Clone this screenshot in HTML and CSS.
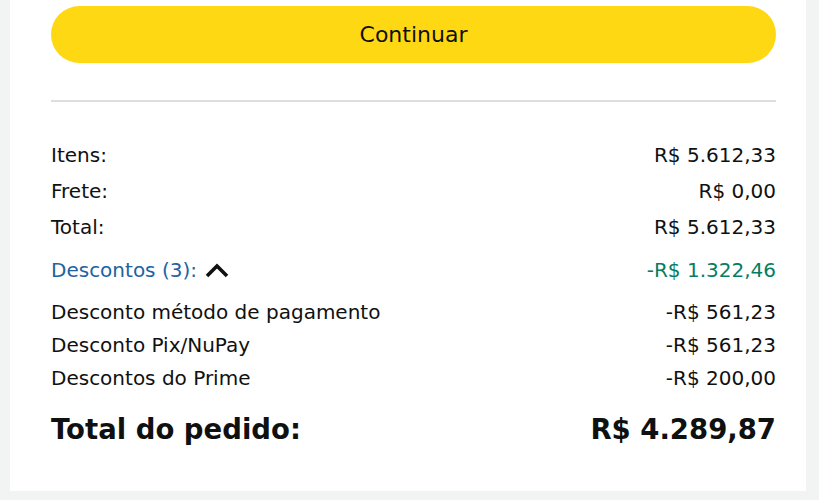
FILE: index.html
```html
<!DOCTYPE html>
<html lang="pt-BR">
<head>
    <meta charset="UTF-8">
    <meta name="viewport" content="width=device-width, initial-scale=1.0">
    <title>Resumo do pedido</title>
    <link rel="stylesheet" href="styles.css">
</head>
<body>
    <div class="card">
        <button class="continue-btn">Continuar</button>
        <hr class="divider">
        <div class="summary">
            <div class="line"><span>Itens:</span><span>R$ 5.612,33</span></div>
            <div class="line"><span>Frete:</span><span>R$ 0,00</span></div>
            <div class="line"><span>Total:</span><span>R$ 5.612,33</span></div>
            <div class="line discount-toggle">
                <span class="toggle-label">Descontos (3):
                    <svg class="chevron" width="26" height="16" viewBox="0 0 26 16"><path d="M3 14 L13 4 L23 14" fill="none" stroke="#0f1111" stroke-width="3.6"/></svg>
                </span>
                <span class="savings">-R$ 1.322,46</span>
            </div>
            <div class="discounts">
                <div class="line"><span>Desconto método de pagamento</span><span>-R$ 561,23</span></div>
                <div class="line"><span>Desconto Pix/NuPay</span><span>-R$ 561,23</span></div>
                <div class="line"><span>Descontos do Prime</span><span>-R$ 200,00</span></div>
            </div>
            <div class="line grand-total"><span>Total do pedido:</span><span>R$ 4.289,87</span></div>
        </div>
    </div>
</body>
</html>
```

FILE: styles.css
```css
body {
    margin: 0;
    background: #f2f3f3;
    font-family: 'DejaVu Sans', 'Noto Sans', sans-serif;
    color: #0f1111;
}
.card {
    width: 796px;
    margin-left: 10px;
    box-sizing: border-box;
    padding: 6px 30px 42px 41px;
    background: #fff;
}
.continue-btn {
    display: block;
    width: 100%;
    height: 57px;
    border: none;
    border-radius: 29px;
    background: #ffd814;
    color: #0f1111;
    font-family: 'DejaVu Sans', 'Noto Sans', sans-serif;
    font-size: 22px;
    cursor: pointer;
}
.divider {
    margin: 37px 0 0;
    border: none;
    border-top: 2px solid #dcdfe0;
}
.summary {
    padding-top: 35px;
}
.line {
    display: flex;
    justify-content: space-between;
    align-items: center;
    font-size: 20px;
    line-height: 36px;
}
.discount-toggle {
    margin-top: 7px;
}
.toggle-label {
    color: #2162a1;
    display: flex;
    align-items: center;
    gap: 7px;
}
.savings {
    color: #067d62;
}
.discounts {
    margin-top: 8px;
}
.discounts .line {
    line-height: 33px;
}
.grand-total {
    margin-top: 14px;
    font-size: 27.5px;
    font-weight: 700;
    line-height: 40px;
}
```
